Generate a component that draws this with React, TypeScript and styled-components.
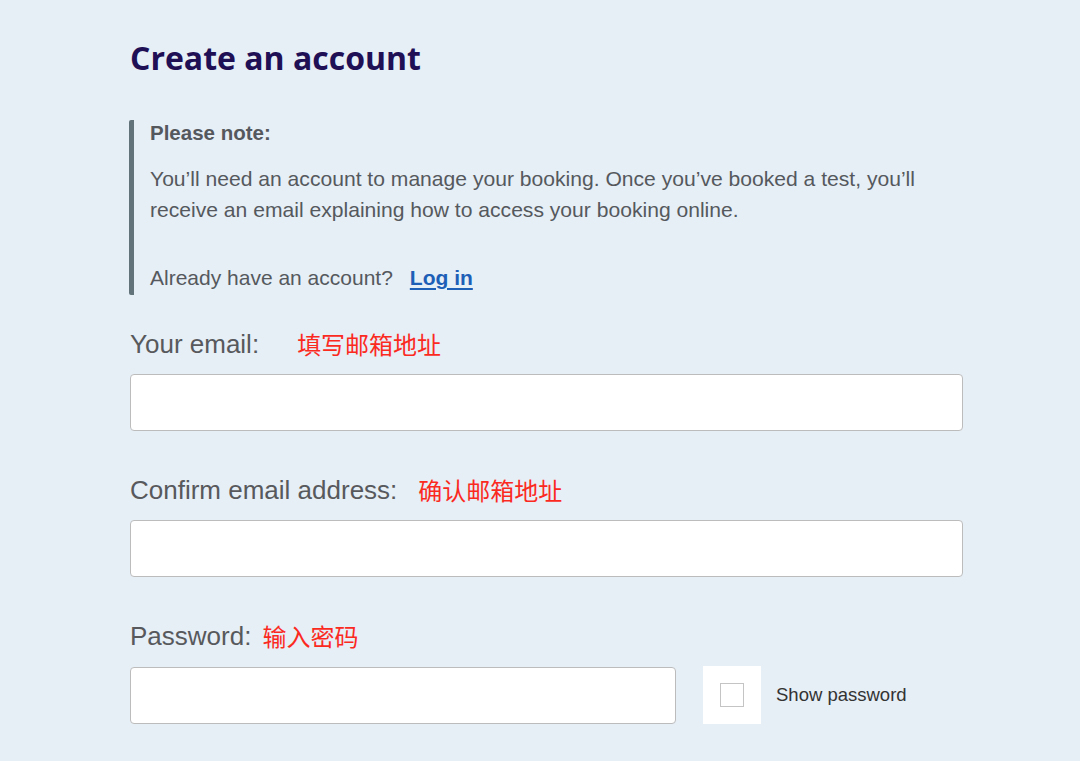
import React from "react";
import styled, { createGlobalStyle } from "styled-components";

const Global = createGlobalStyle`
  html, body { margin: 0; padding: 0; background: #e6eef6; }
  body { font-family: "Liberation Sans", Arial, sans-serif; }
  * { box-sizing: border-box; }
`;

const Page = styled.main`
  width: 1080px;
  height: 761px;
  overflow: hidden;
  background: #e6eef6;
  padding: 38px 0 0 130px;
`;

const Title = styled.h1`
  margin: 0;
  font-family: "Open Sans", "Lato", sans-serif;
  font-weight: 700;
  font-size: 32px;
  line-height: 40px;
  color: #1f0f55;
`;

const Note = styled.section`
  margin-top: 42px;
  margin-left: -1px;
  border-left: 5px solid #627379;
  border-radius: 2px;
  padding: 0 0 2px 16px;
  color: #55595d;
  width: 820px;
`;

const NoteHead = styled.p`
  margin: 0;
  padding-top: 1px;
  font-weight: 700;
  font-size: 20.5px;
  line-height: 24px;
`;

const NoteText = styled.p`
  margin: 18px 0 0;
  font-size: 21.1px;
  line-height: 31px;
`;

const AccountLine = styled.p`
  margin: 37px 0 0;
  font-size: 21px;
  line-height: 31px;
`;

const LoginLink = styled.a`
  color: #1d5fb7;
  font-weight: 700;
  text-decoration: underline;
  text-decoration-thickness: 2px;
  text-underline-offset: 3px;
  margin-left: 17px;
`;

const Field = styled.div<{ $top: number }>`
  display: flex;
  flex-direction: column;
  margin-top: ${(p) => p.$top}px;
`;

const LabelRow = styled.label`
  display: flex;
  align-items: center;
  font-size: 26px;
  line-height: 30px;
  color: #57595c;
`;

const Hint = styled.span<{ $gap: number }>`
  margin-left: ${(p) => p.$gap}px;
  color: #fb2a1f;
  font-family: "Noto Sans CJK SC", sans-serif;
  font-size: 24px;
`;

const TextInput = styled.input<{ $w: number }>`
  width: ${(p) => p.$w}px;
  height: 57px;
  background: #fff;
  border: 1.5px solid #bcbcbc;
  border-radius: 4px;
  font-size: 20px;
  padding: 0 12px;
  outline: none;
`;

const InputRow = styled.div`
  display: flex;
  align-items: center;
  margin-top: 15px;
`;

const CheckWrap = styled.div`
  margin-left: 27px;
  width: 58px;
  height: 58px;
  background: #fff;
  display: flex;
  align-items: center;
  justify-content: center;
`;

const Check = styled.span`
  width: 24px;
  height: 24px;
  border: 1.5px solid #c4c4c4;
  background: #fff;
`;

const CheckLabel = styled.span`
  margin-left: 15px;
  font-size: 18.5px;
  color: #333;
`;

export default function App() {
  return (
    <>
      <Global />
      <Page>
        <Title>Create an account</Title>
        <Note>
          <NoteHead>Please note:</NoteHead>
          <NoteText>
            You’ll need an account to manage your booking. Once you’ve booked a test, you’ll
            <br />
            receive an email explaining how to access your booking online.
          </NoteText>
          <AccountLine>
            Already have an account?<LoginLink href="#">Log in</LoginLink>
          </AccountLine>
        </Note>
        <Field $top={34}>
          <LabelRow>
            Your email:<Hint $gap={38}>填写邮箱地址</Hint>
          </LabelRow>
          <InputRow>
            <TextInput $w={833} type="email" />
          </InputRow>
        </Field>
        <Field $top={44}>
          <LabelRow>
            Confirm email address:<Hint $gap={21}>确认邮箱地址</Hint>
          </LabelRow>
          <InputRow>
            <TextInput $w={833} type="email" />
          </InputRow>
        </Field>
        <Field $top={44}>
          <LabelRow>
            Password:<Hint $gap={11}>输入密码</Hint>
          </LabelRow>
          <InputRow>
            <TextInput $w={546} type="password" />
            <CheckWrap>
              <Check />
            </CheckWrap>
            <CheckLabel>Show password</CheckLabel>
          </InputRow>
        </Field>
      </Page>
    </>
  );
}
